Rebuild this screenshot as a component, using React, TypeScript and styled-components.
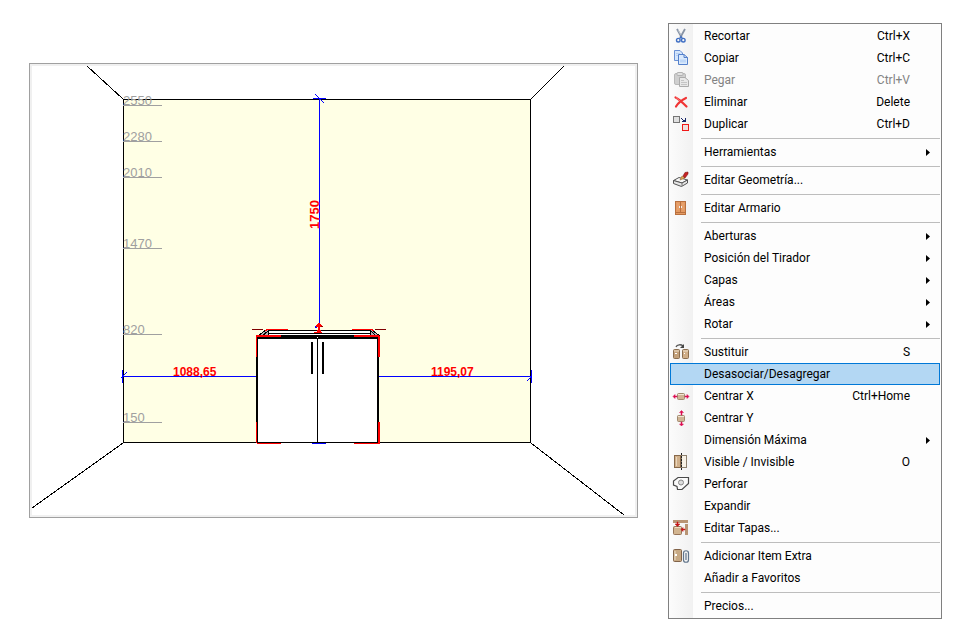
import React from "react";
import styled, { createGlobalStyle } from "styled-components";

const GlobalStyle = createGlobalStyle`
  * { box-sizing: border-box; }
  body { margin: 0; background: #ffffff; }
`;

const Page = styled.main`
  display: flex;
  align-items: flex-start;
  gap: 30px;
  min-height: 100vh;
  padding: 23px 28px 24px 29px;
  font-family: Roboto, "Open Sans", sans-serif;
  font-size: 12px;
  line-height: 20px;
  color: #000000;
`;

const Viewport = styled.section`
  flex: 1;
  min-width: 0;
  margin-top: 40px;
  padding: 2px;
  border: 1px solid #a0a0a0;
  background: #f0f0f0;
`;

const Drawing = styled.svg`
  display: block;
  width: 100%;
  height: auto;
  background: #ffffff;
`;

const LevelText = styled.text`
  font-family: "Liberation Sans", Arial, sans-serif;
  font-size: 13px;
  fill: #a0a0a0;
`;

const DimensionText = styled.text<{ $size: number }>`
  font-family: "Liberation Sans", Arial, sans-serif;
  font-size: ${(p) => p.$size}px;
  font-weight: 700;
  fill: #ff0000;
`;

const Menu = styled.ul`
  flex: 0 0 274px;
  margin: 0;
  padding: 1px;
  list-style: none;
  border: 1px solid #808080;
  background: linear-gradient(to right, #fcfcfc, #f1f1f1) left / 24px 100% no-repeat #fdfdfd;
`;

const MenuRow = styled.li`
  display: block;
`;

const MenuButton = styled.button<{ $active?: boolean }>`
  display: grid;
  grid-template-columns: 20px 1fr auto 20px;
  align-items: center;
  width: 100%;
  height: 22px;
  margin: 0;
  padding: 0 9px 0 1px;
  border: 1px solid ${(p) => (p.$active ? "#0078d7" : "transparent")};
  background: ${(p) => (p.$active ? "#b3d7f3" : "transparent")};
  color: inherit;
  font: inherit;
  text-align: left;
  white-space: nowrap;

  &:disabled { color: #838383; }
`;

const IconCell = styled.span`
  display: flex;
  width: 18px;
  height: 18px;
`;

const Label = styled.span`
  padding-left: 12px;
`;

const Shortcut = styled.span`
  text-align: right;
`;

const ArrowCell = styled.span`
  display: flex;
  justify-content: flex-end;
`;

const Separator = styled.li`
  height: 1px;
  margin: 3px 0 2px 31px;
  background: #bdbdbd;
`;

const levels = [
  { label: "2550", y: 105 },
  { label: "2280", y: 141 },
  { label: "2010", y: 177 },
  { label: "1470", y: 248 },
  { label: "820", y: 334 },
  { label: "150", y: 422 },
];

function RoomView() {
  return (
    <Viewport aria-label="Vista frontal">
      <Drawing viewBox="32 66 603 449" role="img" aria-label="Alzado del armario">
        <g shapeRendering="crispEdges">
          <rect x="123" y="99" width="408" height="344" fill="#000000" />
          <rect x="124" y="100" width="406" height="342" fill="#ffffe5" />
          <path
            d="M87 66L123 99M564 66L531 99M32 508L123 443M531 443L624 515"
            stroke="#000000"
            fill="none"
          />
        </g>
        {levels.map((level) => (
          <g key={level.label}>
            <LevelText x="123" y={level.y}>{level.label}</LevelText>
            <rect x="123" y={level.y} width="39" height="1" fill="#a0a0a0" />
          </g>
        ))}
        <g shapeRendering="crispEdges">
          <g fill="#0000ff">
            <rect x="319" y="99" width="1" height="225" />
            <rect x="313" y="98" width="13" height="1" />
            <rect x="123" y="376" width="133" height="1" />
            <rect x="379" y="376" width="152" height="1" />
            <rect x="122" y="370" width="1" height="13" />
            <rect x="531" y="370" width="1" height="13" />
            <rect x="323" y="334" width="1" height="1" />
          </g>
          <path d="M315 94L324 103M121 378L127 372M527 381L532 376" stroke="#0000ff" fill="none" />
          <rect x="269" y="330" width="101" height="5" fill="#ffffff" />
          <path d="M257 336L266 330H269V336ZM381 336L372 330H370V336Z" fill="#b4b4b4" />
          <path d="M258 336L266 330M262 336L268 331M380 336L372 330M376 336L371 331" stroke="#000000" fill="none" />
          <g fill="#000000">
            <rect x="268" y="330" width="103" height="1" />
            <rect x="268" y="333" width="103" height="1" />
            <rect x="268" y="330" width="1" height="5" />
            <rect x="370" y="330" width="1" height="5" />
            <rect x="256" y="335" width="123" height="108" />
          </g>
          <rect x="258" y="339" width="119" height="103" fill="#ffffff" />
          <g fill="#000000">
            <rect x="317" y="339" width="1" height="103" />
            <rect x="311" y="342" width="2" height="32" />
            <rect x="322" y="342" width="2" height="32" />
          </g>
          <rect x="317" y="337" width="1" height="1" fill="#ffffff" />
          <g fill="#800000">
            <rect x="252" y="329" width="11" height="1" />
            <rect x="375" y="329" width="11" height="1" />
          </g>
          <g fill="#ff0000">
            <rect x="266" y="329" width="22" height="1" />
            <rect x="352" y="329" width="21" height="1" />
            <rect x="265" y="330" width="2" height="1" />
            <rect x="372" y="330" width="2" height="1" />
            <rect x="256" y="335" width="25" height="2" />
            <rect x="354" y="335" width="25" height="2" />
            <rect x="256" y="335" width="1" height="22" />
            <rect x="378" y="336" width="2" height="21" />
            <rect x="256" y="422" width="1" height="21" />
            <rect x="378" y="422" width="2" height="22" />
            <rect x="257" y="443" width="24" height="1" />
            <rect x="354" y="443" width="25" height="1" />
          </g>
          <rect x="312" y="443" width="14" height="1" fill="#0000ff" />
          <path d="M318 323H320V324H321V325H322V327H320V330H321V332H322V333H314V332H317V330H318V327H316V325H317V324H318Z" fill="#ff0000" />
          <path d="M315 326h1v1h1v1h-2z" fill="#0000ff" />
          <path d="M321 326h2v1h-2z" fill="#900000" />
        </g>
        <DimensionText $size={12} x="173" y="376">1088,65</DimensionText>
        <DimensionText $size={12} x="431" y="376">1195,07</DimensionText>
        <DimensionText $size={13} transform="translate(319 229) rotate(-90)">1750</DimensionText>
      </Drawing>
    </Viewport>
  );
}

const icons = {
  cut: (
    <>
      <path d="M5 2L10 11M13 2L8 11" stroke="#8793a5" strokeWidth="1.8" fill="none" />
      <path d="M6 3L9 8" stroke="#c3cbd6" strokeWidth="0.8" />
      <circle cx="6.3" cy="13.2" r="1.8" fill="none" stroke="#3f6fc4" strokeWidth="1.4" />
      <circle cx="11.3" cy="13.2" r="1.8" fill="none" stroke="#3f6fc4" strokeWidth="1.4" />
      <path d="M8 11.5L9 9.5L10 11.5" stroke="#3f6fc4" strokeWidth="1.2" fill="none" />
    </>
  ),
  copy: (
    <>
      <path d="M2.5 1.5H8L10.5 4V11.5H2.5Z" fill="#d5e6fb" stroke="#6a91d4" />
      <path d="M4 4.5H8M4 6.5H7" stroke="#b4cdf2" />
      <path d="M6.5 5.5H12L15.5 8.5V15.5H6.5Z" fill="#dbeafc" stroke="#5480cb" />
      <path d="M12 5.5V8.5H15.5" stroke="#5480cb" fill="none" />
      <path d="M8 10.5H14V13.5H8Z" fill="#bdd6f7" />
    </>
  ),
  paste: (
    <>
      <rect x="2.5" y="2.5" width="11" height="11" rx="1.5" fill="#cfcfcf" stroke="#b8b8b8" />
      <rect x="5" y="1.5" width="6" height="3" rx="1" fill="#e1e1e1" stroke="#b2b2b2" />
      <path d="M7.5 6.5H13L16.5 9.5V15.5H7.5Z" fill="#e8e8e8" stroke="#ababab" />
      <path d="M9 9.5H12M9 11.5H15M9 13.5H15" stroke="#c4c4c4" />
    </>
  ),
  remove: (
    <>
      <path d="M3.500 4.500C7 6 11 10 14.500 13.500M14 5C10 7 6 10 4 13.500" stroke="#f03434" strokeWidth="2.200" fill="none" strokeLinecap="round" />
      <path d="M4 4.500L8 8" stroke="#ff8585" strokeWidth="0.800" />
    </>
  ),
  duplicate: (
    <>
      <rect x="1.5" y="1.5" width="6" height="6" fill="#e0e0e0" stroke="#767676" />
      <rect x="10.5" y="9.5" width="6" height="6" fill="#f0dede" stroke="#f01818" />
      <path d="M9 3h1v1h-1zM10 4h1v1h-1zM11 5h1v1h-1zM13 3h1v4h-4v-1h2v-1h1z" fill="#172568" />
    </>
  ),
  geometry: (
    <>
      <path d="M1.5 9.5L7 6.5L15.5 9L10 12Z" fill="#f8f8f8" stroke="#555555" />
      <path d="M1.5 9.5V12.5L9.5 15.5L15.5 12V9L10 12Z" fill="#e6e6e6" stroke="#555555" />
      <path d="M10 12V15" stroke="#777777" />
      <path d="M8 9L10 5L13 7Z" fill="#e1ab54" stroke="#94652b" strokeWidth="0.6" />
      <path d="M11 5L13 1.5L16 1V3L13 7Z" fill="#c52222" stroke="#811616" strokeWidth="0.6" />
    </>
  ),
  wardrobe: (
    <>
      <rect x="3.5" y="2.5" width="10" height="13" fill="#e39a63" stroke="#b9703e" />
      <path d="M8.5 3V13M4 13.5H13" stroke="#b9703e" />
      <path d="M6 4V11M11 4V11" stroke="#eaa675" />
      <path d="M7 7H8V9H7ZM9 7H10V9H9Z" fill="#eeeeee" />
    </>
  ),
  replace: (
    <>
      <rect x="1.5" y="6.5" width="6" height="9" rx="1" fill="#c3a17b" stroke="#8b6e50" />
      <rect x="10.5" y="6.5" width="6" height="9" rx="1" fill="#d0ae88" stroke="#8b6e50" />
      <path d="M2 8H7M11 8H16" stroke="#eee0cb" />
      <path d="M3 10.5H5M12 10.5H13" stroke="#ffffff" />
      <path d="M4 4C5 1.5 9 1 11 3" stroke="#555555" strokeWidth="1.3" fill="none" />
      <path d="M12 1V5H8Z" fill="#444444" />
    </>
  ),
  centerX: (
    <>
      <rect x="5.5" y="6.5" width="7" height="6" rx="1" fill="#cfb495" stroke="#a0896d" />
      <path d="M6 7.5H12" stroke="#f1e5d3" />
      <path d="M1 9.5L3 7.5V9H5V10H3V11.500ZM17 9.5L15 7.5V9H13V10H15V11.500Z" fill="#dc0c50" stroke="#dc0c50" strokeWidth="0.500" />
    </>
  ),
  centerY: (
    <>
      <rect x="5.5" y="6.5" width="7" height="6" rx="1" fill="#cfb495" stroke="#a0896d" />
      <path d="M6 7.5H12" stroke="#f1e5d3" />
      <path d="M9.500 1.500L11.500 3.500H10V6H9V3.500H7.500ZM9.500 17L11.500 15H10V13H9V15H7.500Z" fill="#dc0c50" stroke="#dc0c50" strokeWidth="0.500" />
    </>
  ),
  visible: (
    <>
      <rect x="2.5" y="2.5" width="6" height="12" fill="#d0b08b" stroke="#87694b" />
      <rect x="9.5" y="2.5" width="5" height="12" fill="#f7f1e5" stroke="#8d806e" />
      <path d="M4.500 4V13" stroke="#e9d6bd" />
      <path d="M9.500 0V17" stroke="#222222" strokeDasharray="2 1" />
    </>
  ),
  drill: (
    <>
      <path d="M6 2.500H16.500V8.500L10 14.500H5.500L5 11.500L1.500 10V6Z" fill="#fafafa" stroke="#484848" strokeWidth="1.2" />
      <circle cx="9" cy="7.5" r="2.5" fill="#dddddd" stroke="#888888" />
    </>
  ),
  covers: (
    <>
      <path d="M1 1H16V4H1ZM13 5H16V16H13Z" fill="#b89474" />
      <rect x="1.5" y="7.5" width="8" height="8" rx="1" fill="#d2b48f" stroke="#967457" />
      <path d="M3 8.500H9" stroke="#efdec3" />
      <path d="M5 3H6V5H8L5.500 7.500L3 5H5ZM9 10.500L11 8.500V10H13V11H11V12.500Z" fill="#c51616" stroke="#c51616" strokeWidth="0.500" />
    </>
  ),
  extra: (
    <>
      <rect x="1.5" y="2.5" width="8" height="12" rx="1" fill="#c7a984" stroke="#816349" />
      <path d="M3 4V13" stroke="#eee0ca" />
      <rect x="3" y="7" width="2" height="2" fill="#ffffff" />
      <path d="M11.5 13V6C11.5 3 16.5 3 16.5 6V13C16.5 16 11.5 16 11.5 13M14 6V13" fill="none" stroke="#61758b" strokeWidth="1.2" />
    </>
  ),
};

type IconName = keyof typeof icons;

type Entry =
  | { kind: "separator" }
  | {
      kind?: "item";
      label: string;
      icon?: IconName;
      shortcut?: string;
      submenu?: boolean;
      disabled?: boolean;
      active?: boolean;
    };

const entries: Entry[] = [
  { label: "Recortar", icon: "cut", shortcut: "Ctrl+X" },
  { label: "Copiar", icon: "copy", shortcut: "Ctrl+C" },
  { label: "Pegar", icon: "paste", shortcut: "Ctrl+V", disabled: true },
  { label: "Eliminar", icon: "remove", shortcut: "Delete" },
  { label: "Duplicar", icon: "duplicate", shortcut: "Ctrl+D" },
  { kind: "separator" },
  { label: "Herramientas", submenu: true },
  { kind: "separator" },
  { label: "Editar Geometría...", icon: "geometry" },
  { kind: "separator" },
  { label: "Editar Armario", icon: "wardrobe" },
  { kind: "separator" },
  { label: "Aberturas", submenu: true },
  { label: "Posición del Tirador", submenu: true },
  { label: "Capas", submenu: true },
  { label: "Áreas", submenu: true },
  { label: "Rotar", submenu: true },
  { kind: "separator" },
  { label: "Sustituir", icon: "replace", shortcut: "S" },
  { label: "Desasociar/Desagregar", active: true },
  { label: "Centrar X", icon: "centerX", shortcut: "Ctrl+Home" },
  { label: "Centrar Y", icon: "centerY" },
  { label: "Dimensión Máxima", submenu: true },
  { label: "Visible / Invisible", icon: "visible", shortcut: "O" },
  { label: "Perforar", icon: "drill" },
  { label: "Expandir" },
  { label: "Editar Tapas...", icon: "covers" },
  { kind: "separator" },
  { label: "Adicionar Item Extra", icon: "extra" },
  { label: "Añadir a Favoritos" },
  { kind: "separator" },
  { label: "Precios..." },
];

function ContextMenu() {
  return (
    <Menu role="menu" aria-label="Menú contextual">
      {entries.map((entry, index) =>
        entry.kind === "separator" ? (
          <Separator key={index} role="separator" />
        ) : (
          <MenuRow key={entry.label} role="none">
            <MenuButton
              type="button"
              role="menuitem"
              disabled={entry.disabled}
              aria-haspopup={entry.submenu ? "menu" : undefined}
              $active={entry.active}
            >
              <IconCell>
                {entry.icon && (
                  <svg width="18" height="18" viewBox="0 0 18 18" aria-hidden="true">
                    {icons[entry.icon]}
                  </svg>
                )}
              </IconCell>
              <Label>{entry.label}</Label>
              <Shortcut>{entry.shortcut}</Shortcut>
              <ArrowCell>
                {entry.submenu && (
                  <svg width="4" height="7" viewBox="0 0 4 7" aria-hidden="true">
                    <path d="M0 0L4 3.5L0 7Z" fill="#000000" />
                  </svg>
                )}
              </ArrowCell>
            </MenuButton>
          </MenuRow>
        ),
      )}
    </Menu>
  );
}

export default function App() {
  return (
    <>
      <GlobalStyle />
      <Page>
        <RoomView />
        <ContextMenu />
      </Page>
    </>
  );
}
